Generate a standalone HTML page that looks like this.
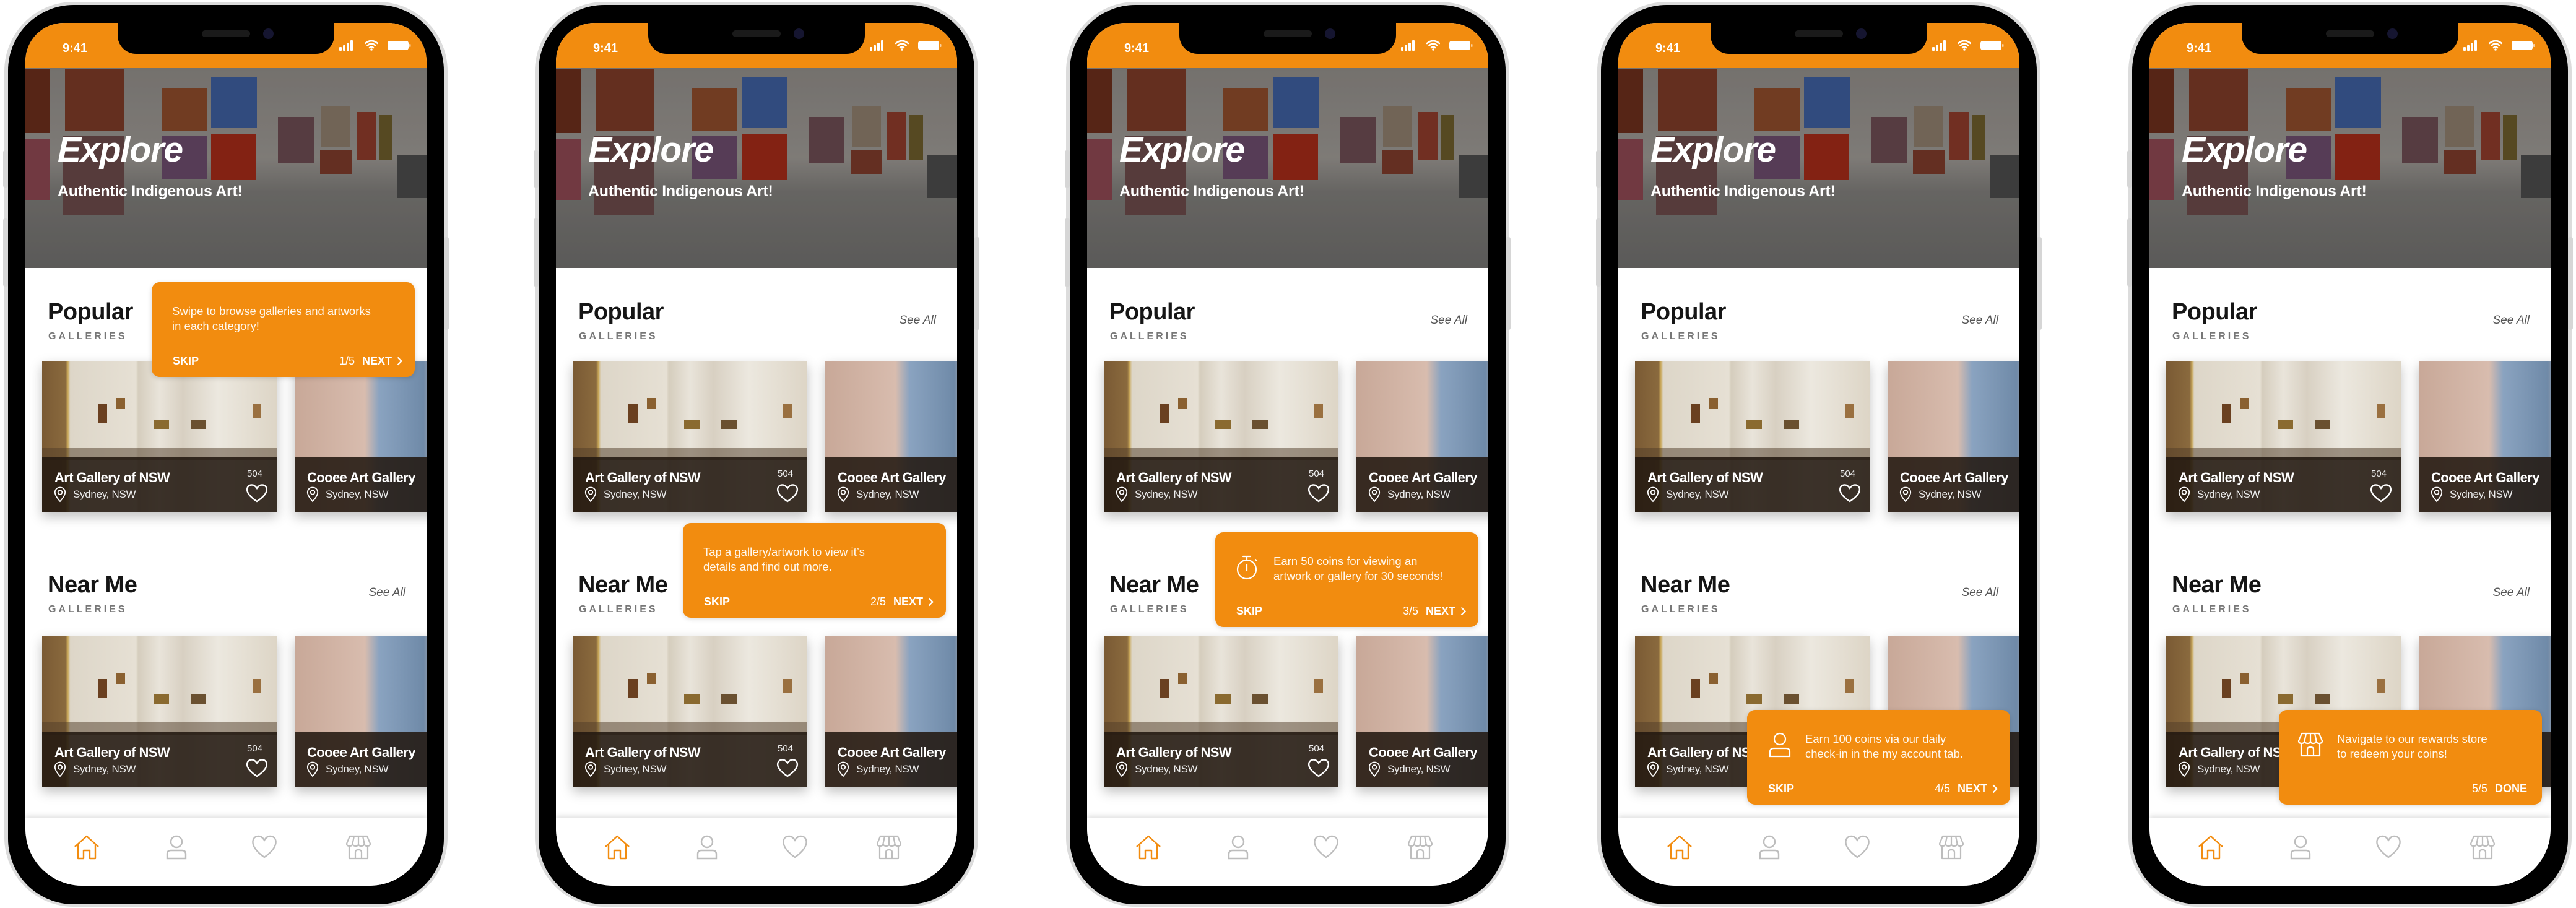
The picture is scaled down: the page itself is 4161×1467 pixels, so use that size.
<!DOCTYPE html>
<html><head><meta charset="utf-8">
<style>
*{margin:0;padding:0;box-sizing:border-box}
body{width:4161px;height:1467px;background:#fff;position:relative;overflow:hidden;font-family:"Liberation Sans",sans-serif}
.ph{position:absolute;top:3px;width:716px;height:1462px}
.rim{position:absolute;inset:0;border-radius:112px;background:#dcdcdc}
.blk{position:absolute;left:6px;top:5px;right:6px;bottom:4px;border-radius:106px;background:#000}
.btn{position:absolute;background:#d6d6d6;width:8px;border-radius:3px}
.scr{position:absolute;left:34px;top:34px;width:648px;height:1394px;background:#fff;overflow:hidden;border-radius:62px 62px 92px 92px}
.st{position:absolute;left:0;top:0;width:648px;height:73px;background:#f28c0f}
.notch{position:absolute;left:149px;top:0;width:350px;height:50px;background:#000;border-radius:0 0 30px 30px}
.spk{position:absolute;left:136px;top:12px;width:78px;height:11px;border-radius:6px;background:#1a1a1a}
.cam{position:absolute;left:235px;top:9px;width:17px;height:17px;border-radius:50%;background:#151530}
.time{position:absolute;left:60px;top:30px;color:#fff;font-size:20px;font-weight:bold}
.hero{position:absolute;left:0;top:73px;width:648px;height:323px;background:linear-gradient(180deg,#8e8a86 0%,#9a9691 45%,#7d7b78 62%,#6f6e6c 100%);overflow:hidden}
.hero i{position:absolute;display:block}
.hero .ov{inset:0;background:rgba(0,0,0,.18)}
.ex{position:absolute;left:52px;top:172px;color:#fff;font-size:57px;font-weight:bold;font-style:italic;letter-spacing:-1px}
.sub{position:absolute;left:52px;top:258px;color:#fff;font-size:25px;font-weight:bold;letter-spacing:-.3px}
.h2{position:absolute;left:36px;font-size:38px;font-weight:bold;color:#151515;letter-spacing:-.5px}
.gal{position:absolute;left:37px;font-size:16px;font-weight:bold;color:#777;letter-spacing:4px}
.see{position:absolute;right:34px;font-size:19px;font-style:italic;color:#555}
.card{position:absolute;width:379px;height:244px;box-shadow:0 8px 18px rgba(0,0,0,.25);overflow:hidden}
.c1{background:linear-gradient(90deg,#7a5a34 0,#8a6a3e 10%,#c9a85a 11%,#ddd6c8 12%,#e6e0d4 40%,#d5cdbd 41%,#e9e4da 50%,#d8d0c2 60%,#ece8df 75%,#ddd5c6 100%)}
.c2{background:linear-gradient(90deg,#c8a898 0,#d8bcae 30%,#8aa3c0 36%,#6f8aa8 55%,#d8bcae 62%,#e2844a 68%,#f0a060 78%,#d8bcae 82%,#caa898 100%)}
.card i{position:absolute;display:block}
.card .ov2{left:0;right:0;bottom:0;height:88px;background:rgba(34,24,16,.88)}
.card .floor{left:0;right:0;top:140px;height:20px;background:rgba(80,60,40,.5)}
.ct{position:absolute;left:20px;top:176px;color:#fff;font-size:22px;font-weight:bold;letter-spacing:-.6px}
.cl{position:absolute;left:50px;top:206px;color:#eee;font-size:17px;letter-spacing:-.3px}
.pin{position:absolute;left:19px;top:203px}
.cn{position:absolute;left:331px;top:174px;color:#eee;font-size:15px}
.hrt{position:absolute;left:329px;top:199px}
.tab{position:absolute;left:0;top:1285px;width:648px;height:109px;background:#fff;box-shadow:0 -4px 8px rgba(0,0,0,.12)}
.tab svg{position:absolute;top:27px}
.tip{position:absolute;width:425px;height:153px;background:#f28c0f;border-radius:13px;color:#fff;box-shadow:0 2px 8px rgba(0,0,0,.15)}
.tip .tx{position:absolute;left:33px;top:35px;font-size:18.5px;line-height:24px;color:#fff8ee;white-space:nowrap}
.tip .tx.w{left:94px}
.tip .ico{position:absolute;left:34px;top:36px}
.tip .skip{position:absolute;left:34px;top:117px;font-size:18px;font-weight:bold}
.tip .nx{position:absolute;right:20px;top:117px;font-size:18px;font-weight:bold;white-space:nowrap}
.tip .nx span{font-weight:normal;margin-right:12px}
.tip .nx svg{margin-left:8px;vertical-align:-2px}
</style></head><body>

<!-- ===== PHONE 1 ===== -->
<div class="ph" style="left:7px">
<div class="rim"></div><div class="blk"></div>
<div class="scr">
 <div class="hero"><i style="left:0;top:1px;width:40px;height:104px;background:#6a2e1c"></i><i style="left:0;top:115px;width:40px;height:98px;background:#8a4650"></i><i style="left:64px;top:1px;width:95px;height:100px;background:#7a3a26"></i><i style="left:61px;top:110px;width:98px;height:127px;background:#6a4848"></i><i style="left:220px;top:32px;width:73px;height:69px;background:#8a4a2a"></i><i style="left:300px;top:15px;width:74px;height:81px;background:#3c5c9a"></i><i style="left:220px;top:110px;width:73px;height:69px;background:#6a4a6a"></i><i style="left:300px;top:106px;width:73px;height:75px;background:#a02a18"></i><i style="left:408px;top:79px;width:58px;height:75px;background:#6a4a50"></i><i style="left:478px;top:62px;width:47px;height:65px;background:#8a7a6a"></i><i style="left:535px;top:71px;width:31px;height:78px;background:#8a3a2a"></i><i style="left:571px;top:76px;width:22px;height:73px;background:#6a5a2a"></i><i style="left:476px;top:132px;width:51px;height:39px;background:#7a3a2a"></i><i style="left:600px;top:140px;width:48px;height:70px;background:#4a4a4a"></i><i class="ov"></i></div>
 <div class="ex">Explore</div><div class="sub">Authentic Indigenous Art!</div>
 <div class="h2" style="top:446px">Popular</div><div class="gal" style="top:498px">GALLERIES</div><div class="see" style="top:470px">See All</div>
 <div class="card c1" style="left:27px;top:546px"><i style="left:120px;top:60px;width:14px;height:18px;background:#8a6030"></i><i style="left:90px;top:70px;width:15px;height:30px;background:#6a4020"></i><i style="left:180px;top:95px;width:25px;height:15px;background:#8a6a30"></i><i style="left:240px;top:95px;width:25px;height:15px;background:#6a5030"></i><i style="left:340px;top:70px;width:14px;height:22px;background:#9a7040"></i><i class="floor"></i><i class="ov2"></i><div class="ct">Art Gallery of NSW</div><svg class="pin" width="20" height="26" viewBox="0 0 20 26"><path d="M10 1.5C5.3 1.5 1.8 5 1.8 9.5 1.8 15.5 10 24 10 24s8.2-8.5 8.2-14.5C18.2 5 14.7 1.5 10 1.5z" fill="none" stroke="#fff" stroke-width="1.8"/><circle cx="10" cy="9.5" r="3.3" fill="none" stroke="#fff" stroke-width="1.8"/></svg><div class="cl">Sydney, NSW</div><div class="cn">504</div><svg class="hrt" width="36" height="30" viewBox="0 0 36 30"><path d="M18 28S3 19 2.2 10C1.6 4.5 5.5 1.5 9.8 1.5c3.8 0 6.3 2.4 8.2 5.4 1.9-3 4.4-5.4 8.2-5.4 4.3 0 8.2 3 7.6 8.5C33 19 18 28 18 28z" fill="none" stroke="#fff" stroke-width="2.4"/></svg></div>
 <div class="card c2" style="left:435px;top:546px"><i class="ov2"></i><div class="ct">Cooee Art Gallery</div><svg class="pin" width="20" height="26" viewBox="0 0 20 26"><path d="M10 1.5C5.3 1.5 1.8 5 1.8 9.5 1.8 15.5 10 24 10 24s8.2-8.5 8.2-14.5C18.2 5 14.7 1.5 10 1.5z" fill="none" stroke="#fff" stroke-width="1.8"/><circle cx="10" cy="9.5" r="3.3" fill="none" stroke="#fff" stroke-width="1.8"/></svg><div class="cl">Sydney, NSW</div></div>
 <div class="h2" style="top:887px">Near Me</div><div class="gal" style="top:939px">GALLERIES</div><div class="see" style="top:910px">See All</div>
 <div class="card c1" style="left:27px;top:990px"><i style="left:120px;top:60px;width:14px;height:18px;background:#8a6030"></i><i style="left:90px;top:70px;width:15px;height:30px;background:#6a4020"></i><i style="left:180px;top:95px;width:25px;height:15px;background:#8a6a30"></i><i style="left:240px;top:95px;width:25px;height:15px;background:#6a5030"></i><i style="left:340px;top:70px;width:14px;height:22px;background:#9a7040"></i><i class="floor"></i><i class="ov2"></i><div class="ct">Art Gallery of NSW</div><svg class="pin" width="20" height="26" viewBox="0 0 20 26"><path d="M10 1.5C5.3 1.5 1.8 5 1.8 9.5 1.8 15.5 10 24 10 24s8.2-8.5 8.2-14.5C18.2 5 14.7 1.5 10 1.5z" fill="none" stroke="#fff" stroke-width="1.8"/><circle cx="10" cy="9.5" r="3.3" fill="none" stroke="#fff" stroke-width="1.8"/></svg><div class="cl">Sydney, NSW</div><div class="cn">504</div><svg class="hrt" width="36" height="30" viewBox="0 0 36 30"><path d="M18 28S3 19 2.2 10C1.6 4.5 5.5 1.5 9.8 1.5c3.8 0 6.3 2.4 8.2 5.4 1.9-3 4.4-5.4 8.2-5.4 4.3 0 8.2 3 7.6 8.5C33 19 18 28 18 28z" fill="none" stroke="#fff" stroke-width="2.4"/></svg></div>
 <div class="card c2" style="left:435px;top:990px"><i class="ov2"></i><div class="ct">Cooee Art Gallery</div><svg class="pin" width="20" height="26" viewBox="0 0 20 26"><path d="M10 1.5C5.3 1.5 1.8 5 1.8 9.5 1.8 15.5 10 24 10 24s8.2-8.5 8.2-14.5C18.2 5 14.7 1.5 10 1.5z" fill="none" stroke="#fff" stroke-width="1.8"/><circle cx="10" cy="9.5" r="3.3" fill="none" stroke="#fff" stroke-width="1.8"/></svg><div class="cl">Sydney, NSW</div></div>
 <div class="tab"><svg style="left:78px" width="42" height="40" viewBox="0 0 42 40"><path d="M2 19 L21 2 L40 19 M7 15 V38 H16 V25 H26 V38 H35 V15" fill="none" stroke="#f28c0f" stroke-width="2.4" stroke-linejoin="round"/></svg><svg style="left:226px" width="36" height="40" viewBox="0 0 36 40"><circle cx="18" cy="11" r="9" fill="none" stroke="#bdbdbd" stroke-width="2.4"/><path d="M9 25 H27 Q33 25 33 31 V38 H3 V31 Q3 25 9 25z" fill="none" stroke="#bdbdbd" stroke-width="2.4"/></svg><svg style="left:365px" width="42" height="38" viewBox="0 0 42 38"><path d="M21 36S4 25 2.5 13C1.7 6 6 2 11.5 2c4.4 0 7.5 3 9.5 6.5C23 5 26.1 2 30.5 2 36 2 40.3 6 39.5 13 38 25 21 36 21 36z" fill="none" stroke="#bdbdbd" stroke-width="2.4"/></svg><svg style="left:517px" width="42" height="40" viewBox="0 0 42 40"><path d="M7 2 H35 L40 14 Q40 18 35 18 Q31 18 30.5 14 Q30 18 25.5 18 Q21 18 21 14 Q21 18 16.5 18 Q12 18 11.5 14 Q11 18 7 18 Q2 18 2 14z M14 2 L11.5 14 M28 2 L30.5 14 M21 2 V14 M6 18 V38 H36 V18 M16 38 V28 Q16 24 21 24 Q26 24 26 28 V38" fill="none" stroke="#bdbdbd" stroke-width="2.2" stroke-linejoin="round"/></svg></div>
 <div class="tip" style="left:204px;top:419px"><div class="tx">Swipe to browse galleries and artworks<br>in each category!</div><div class="skip">SKIP</div><div class="nx"><span>1/5</span>NEXT<svg width="9" height="15" viewBox="0 0 9 15"><path d="M1.5 1.5 L7.5 7.5 L1.5 13.5" fill="none" stroke="#fff" stroke-width="2.2"/></svg></div></div>
 <div class="st"><div class="time">9:41</div><svg style="position:absolute;left:507px;top:28px" width="22" height="17" viewBox="0 0 22 17"><rect x="0" y="11" width="4" height="6" rx="1" fill="#fff"/><rect x="6" y="8" width="4" height="9" rx="1" fill="#fff"/><rect x="12" y="4" width="4" height="13" rx="1" fill="#fff"/><rect x="18" y="0" width="4" height="17" rx="1" fill="#fff"/></svg><svg style="position:absolute;left:548px;top:27px" width="22" height="18" viewBox="0 0 22 18"><path d="M1 6 Q11 -2 21 6 M4.5 9.5 Q11 4 17.5 9.5 M8 13 Q11 10.5 14 13" fill="none" stroke="#fff" stroke-width="2.6" stroke-linecap="round"/><circle cx="11" cy="16" r="1.8" fill="#fff"/></svg><svg style="position:absolute;left:585px;top:28px" width="38" height="17" viewBox="0 0 38 17"><rect x="0" y="1" width="34" height="15" rx="4" fill="#fff"/><rect x="35" y="6" width="2.5" height="5" rx="1" fill="#fff" opacity=".6"/></svg></div>
 <div class="notch"><div class="spk"></div><div class="cam"></div></div>
</div>
<div class="btn" style="left:-2px;top:240px;height:60px"></div><div class="btn" style="left:-2px;top:350px;height:110px"></div><div class="btn" style="right:-2px;top:380px;height:150px"></div>
</div>

<!-- ===== PHONE 2 ===== -->
<div class="ph" style="left:864px">
<div class="rim"></div><div class="blk"></div>
<div class="scr">
 <div class="hero"><i style="left:0;top:1px;width:40px;height:104px;background:#6a2e1c"></i><i style="left:0;top:115px;width:40px;height:98px;background:#8a4650"></i><i style="left:64px;top:1px;width:95px;height:100px;background:#7a3a26"></i><i style="left:61px;top:110px;width:98px;height:127px;background:#6a4848"></i><i style="left:220px;top:32px;width:73px;height:69px;background:#8a4a2a"></i><i style="left:300px;top:15px;width:74px;height:81px;background:#3c5c9a"></i><i style="left:220px;top:110px;width:73px;height:69px;background:#6a4a6a"></i><i style="left:300px;top:106px;width:73px;height:75px;background:#a02a18"></i><i style="left:408px;top:79px;width:58px;height:75px;background:#6a4a50"></i><i style="left:478px;top:62px;width:47px;height:65px;background:#8a7a6a"></i><i style="left:535px;top:71px;width:31px;height:78px;background:#8a3a2a"></i><i style="left:571px;top:76px;width:22px;height:73px;background:#6a5a2a"></i><i style="left:476px;top:132px;width:51px;height:39px;background:#7a3a2a"></i><i style="left:600px;top:140px;width:48px;height:70px;background:#4a4a4a"></i><i class="ov"></i></div>
 <div class="ex">Explore</div><div class="sub">Authentic Indigenous Art!</div>
 <div class="h2" style="top:446px">Popular</div><div class="gal" style="top:498px">GALLERIES</div><div class="see" style="top:470px">See All</div>
 <div class="card c1" style="left:27px;top:546px"><i style="left:120px;top:60px;width:14px;height:18px;background:#8a6030"></i><i style="left:90px;top:70px;width:15px;height:30px;background:#6a4020"></i><i style="left:180px;top:95px;width:25px;height:15px;background:#8a6a30"></i><i style="left:240px;top:95px;width:25px;height:15px;background:#6a5030"></i><i style="left:340px;top:70px;width:14px;height:22px;background:#9a7040"></i><i class="floor"></i><i class="ov2"></i><div class="ct">Art Gallery of NSW</div><svg class="pin" width="20" height="26" viewBox="0 0 20 26"><path d="M10 1.5C5.3 1.5 1.8 5 1.8 9.5 1.8 15.5 10 24 10 24s8.2-8.5 8.2-14.5C18.2 5 14.7 1.5 10 1.5z" fill="none" stroke="#fff" stroke-width="1.8"/><circle cx="10" cy="9.5" r="3.3" fill="none" stroke="#fff" stroke-width="1.8"/></svg><div class="cl">Sydney, NSW</div><div class="cn">504</div><svg class="hrt" width="36" height="30" viewBox="0 0 36 30"><path d="M18 28S3 19 2.2 10C1.6 4.5 5.5 1.5 9.8 1.5c3.8 0 6.3 2.4 8.2 5.4 1.9-3 4.4-5.4 8.2-5.4 4.3 0 8.2 3 7.6 8.5C33 19 18 28 18 28z" fill="none" stroke="#fff" stroke-width="2.4"/></svg></div>
 <div class="card c2" style="left:435px;top:546px"><i class="ov2"></i><div class="ct">Cooee Art Gallery</div><svg class="pin" width="20" height="26" viewBox="0 0 20 26"><path d="M10 1.5C5.3 1.5 1.8 5 1.8 9.5 1.8 15.5 10 24 10 24s8.2-8.5 8.2-14.5C18.2 5 14.7 1.5 10 1.5z" fill="none" stroke="#fff" stroke-width="1.8"/><circle cx="10" cy="9.5" r="3.3" fill="none" stroke="#fff" stroke-width="1.8"/></svg><div class="cl">Sydney, NSW</div></div>
 <div class="h2" style="top:887px">Near Me</div><div class="gal" style="top:939px">GALLERIES</div><div class="see" style="top:910px">See All</div>
 <div class="card c1" style="left:27px;top:990px"><i style="left:120px;top:60px;width:14px;height:18px;background:#8a6030"></i><i style="left:90px;top:70px;width:15px;height:30px;background:#6a4020"></i><i style="left:180px;top:95px;width:25px;height:15px;background:#8a6a30"></i><i style="left:240px;top:95px;width:25px;height:15px;background:#6a5030"></i><i style="left:340px;top:70px;width:14px;height:22px;background:#9a7040"></i><i class="floor"></i><i class="ov2"></i><div class="ct">Art Gallery of NSW</div><svg class="pin" width="20" height="26" viewBox="0 0 20 26"><path d="M10 1.5C5.3 1.5 1.8 5 1.8 9.5 1.8 15.5 10 24 10 24s8.2-8.5 8.2-14.5C18.2 5 14.7 1.5 10 1.5z" fill="none" stroke="#fff" stroke-width="1.8"/><circle cx="10" cy="9.5" r="3.3" fill="none" stroke="#fff" stroke-width="1.8"/></svg><div class="cl">Sydney, NSW</div><div class="cn">504</div><svg class="hrt" width="36" height="30" viewBox="0 0 36 30"><path d="M18 28S3 19 2.2 10C1.6 4.5 5.5 1.5 9.8 1.5c3.8 0 6.3 2.4 8.2 5.4 1.9-3 4.4-5.4 8.2-5.4 4.3 0 8.2 3 7.6 8.5C33 19 18 28 18 28z" fill="none" stroke="#fff" stroke-width="2.4"/></svg></div>
 <div class="card c2" style="left:435px;top:990px"><i class="ov2"></i><div class="ct">Cooee Art Gallery</div><svg class="pin" width="20" height="26" viewBox="0 0 20 26"><path d="M10 1.5C5.3 1.5 1.8 5 1.8 9.5 1.8 15.5 10 24 10 24s8.2-8.5 8.2-14.5C18.2 5 14.7 1.5 10 1.5z" fill="none" stroke="#fff" stroke-width="1.8"/><circle cx="10" cy="9.5" r="3.3" fill="none" stroke="#fff" stroke-width="1.8"/></svg><div class="cl">Sydney, NSW</div></div>
 <div class="tab"><svg style="left:78px" width="42" height="40" viewBox="0 0 42 40"><path d="M2 19 L21 2 L40 19 M7 15 V38 H16 V25 H26 V38 H35 V15" fill="none" stroke="#f28c0f" stroke-width="2.4" stroke-linejoin="round"/></svg><svg style="left:226px" width="36" height="40" viewBox="0 0 36 40"><circle cx="18" cy="11" r="9" fill="none" stroke="#bdbdbd" stroke-width="2.4"/><path d="M9 25 H27 Q33 25 33 31 V38 H3 V31 Q3 25 9 25z" fill="none" stroke="#bdbdbd" stroke-width="2.4"/></svg><svg style="left:365px" width="42" height="38" viewBox="0 0 42 38"><path d="M21 36S4 25 2.5 13C1.7 6 6 2 11.5 2c4.4 0 7.5 3 9.5 6.5C23 5 26.1 2 30.5 2 36 2 40.3 6 39.5 13 38 25 21 36 21 36z" fill="none" stroke="#bdbdbd" stroke-width="2.4"/></svg><svg style="left:517px" width="42" height="40" viewBox="0 0 42 40"><path d="M7 2 H35 L40 14 Q40 18 35 18 Q31 18 30.5 14 Q30 18 25.5 18 Q21 18 21 14 Q21 18 16.5 18 Q12 18 11.5 14 Q11 18 7 18 Q2 18 2 14z M14 2 L11.5 14 M28 2 L30.5 14 M21 2 V14 M6 18 V38 H36 V18 M16 38 V28 Q16 24 21 24 Q26 24 26 28 V38" fill="none" stroke="#bdbdbd" stroke-width="2.2" stroke-linejoin="round"/></svg></div>
 <div class="tip" style="left:205px;top:808px"><div class="tx">Tap a gallery/artwork to view it’s<br>details and find out more.</div><div class="skip">SKIP</div><div class="nx"><span>2/5</span>NEXT<svg width="9" height="15" viewBox="0 0 9 15"><path d="M1.5 1.5 L7.5 7.5 L1.5 13.5" fill="none" stroke="#fff" stroke-width="2.2"/></svg></div></div>
 <div class="st"><div class="time">9:41</div><svg style="position:absolute;left:507px;top:28px" width="22" height="17" viewBox="0 0 22 17"><rect x="0" y="11" width="4" height="6" rx="1" fill="#fff"/><rect x="6" y="8" width="4" height="9" rx="1" fill="#fff"/><rect x="12" y="4" width="4" height="13" rx="1" fill="#fff"/><rect x="18" y="0" width="4" height="17" rx="1" fill="#fff"/></svg><svg style="position:absolute;left:548px;top:27px" width="22" height="18" viewBox="0 0 22 18"><path d="M1 6 Q11 -2 21 6 M4.5 9.5 Q11 4 17.5 9.5 M8 13 Q11 10.5 14 13" fill="none" stroke="#fff" stroke-width="2.6" stroke-linecap="round"/><circle cx="11" cy="16" r="1.8" fill="#fff"/></svg><svg style="position:absolute;left:585px;top:28px" width="38" height="17" viewBox="0 0 38 17"><rect x="0" y="1" width="34" height="15" rx="4" fill="#fff"/><rect x="35" y="6" width="2.5" height="5" rx="1" fill="#fff" opacity=".6"/></svg></div>
 <div class="notch"><div class="spk"></div><div class="cam"></div></div>
</div>
<div class="btn" style="left:-2px;top:240px;height:60px"></div><div class="btn" style="left:-2px;top:350px;height:110px"></div><div class="btn" style="right:-2px;top:380px;height:150px"></div>
</div>

<!-- ===== PHONE 3 ===== -->
<div class="ph" style="left:1722px">
<div class="rim"></div><div class="blk"></div>
<div class="scr">
 <div class="hero"><i style="left:0;top:1px;width:40px;height:104px;background:#6a2e1c"></i><i style="left:0;top:115px;width:40px;height:98px;background:#8a4650"></i><i style="left:64px;top:1px;width:95px;height:100px;background:#7a3a26"></i><i style="left:61px;top:110px;width:98px;height:127px;background:#6a4848"></i><i style="left:220px;top:32px;width:73px;height:69px;background:#8a4a2a"></i><i style="left:300px;top:15px;width:74px;height:81px;background:#3c5c9a"></i><i style="left:220px;top:110px;width:73px;height:69px;background:#6a4a6a"></i><i style="left:300px;top:106px;width:73px;height:75px;background:#a02a18"></i><i style="left:408px;top:79px;width:58px;height:75px;background:#6a4a50"></i><i style="left:478px;top:62px;width:47px;height:65px;background:#8a7a6a"></i><i style="left:535px;top:71px;width:31px;height:78px;background:#8a3a2a"></i><i style="left:571px;top:76px;width:22px;height:73px;background:#6a5a2a"></i><i style="left:476px;top:132px;width:51px;height:39px;background:#7a3a2a"></i><i style="left:600px;top:140px;width:48px;height:70px;background:#4a4a4a"></i><i class="ov"></i></div>
 <div class="ex">Explore</div><div class="sub">Authentic Indigenous Art!</div>
 <div class="h2" style="top:446px">Popular</div><div class="gal" style="top:498px">GALLERIES</div><div class="see" style="top:470px">See All</div>
 <div class="card c1" style="left:27px;top:546px"><i style="left:120px;top:60px;width:14px;height:18px;background:#8a6030"></i><i style="left:90px;top:70px;width:15px;height:30px;background:#6a4020"></i><i style="left:180px;top:95px;width:25px;height:15px;background:#8a6a30"></i><i style="left:240px;top:95px;width:25px;height:15px;background:#6a5030"></i><i style="left:340px;top:70px;width:14px;height:22px;background:#9a7040"></i><i class="floor"></i><i class="ov2"></i><div class="ct">Art Gallery of NSW</div><svg class="pin" width="20" height="26" viewBox="0 0 20 26"><path d="M10 1.5C5.3 1.5 1.8 5 1.8 9.5 1.8 15.5 10 24 10 24s8.2-8.5 8.2-14.5C18.2 5 14.7 1.5 10 1.5z" fill="none" stroke="#fff" stroke-width="1.8"/><circle cx="10" cy="9.5" r="3.3" fill="none" stroke="#fff" stroke-width="1.8"/></svg><div class="cl">Sydney, NSW</div><div class="cn">504</div><svg class="hrt" width="36" height="30" viewBox="0 0 36 30"><path d="M18 28S3 19 2.2 10C1.6 4.5 5.5 1.5 9.8 1.5c3.8 0 6.3 2.4 8.2 5.4 1.9-3 4.4-5.4 8.2-5.4 4.3 0 8.2 3 7.6 8.5C33 19 18 28 18 28z" fill="none" stroke="#fff" stroke-width="2.4"/></svg></div>
 <div class="card c2" style="left:435px;top:546px"><i class="ov2"></i><div class="ct">Cooee Art Gallery</div><svg class="pin" width="20" height="26" viewBox="0 0 20 26"><path d="M10 1.5C5.3 1.5 1.8 5 1.8 9.5 1.8 15.5 10 24 10 24s8.2-8.5 8.2-14.5C18.2 5 14.7 1.5 10 1.5z" fill="none" stroke="#fff" stroke-width="1.8"/><circle cx="10" cy="9.5" r="3.3" fill="none" stroke="#fff" stroke-width="1.8"/></svg><div class="cl">Sydney, NSW</div></div>
 <div class="h2" style="top:887px">Near Me</div><div class="gal" style="top:939px">GALLERIES</div><div class="see" style="top:910px">See All</div>
 <div class="card c1" style="left:27px;top:990px"><i style="left:120px;top:60px;width:14px;height:18px;background:#8a6030"></i><i style="left:90px;top:70px;width:15px;height:30px;background:#6a4020"></i><i style="left:180px;top:95px;width:25px;height:15px;background:#8a6a30"></i><i style="left:240px;top:95px;width:25px;height:15px;background:#6a5030"></i><i style="left:340px;top:70px;width:14px;height:22px;background:#9a7040"></i><i class="floor"></i><i class="ov2"></i><div class="ct">Art Gallery of NSW</div><svg class="pin" width="20" height="26" viewBox="0 0 20 26"><path d="M10 1.5C5.3 1.5 1.8 5 1.8 9.5 1.8 15.5 10 24 10 24s8.2-8.5 8.2-14.5C18.2 5 14.7 1.5 10 1.5z" fill="none" stroke="#fff" stroke-width="1.8"/><circle cx="10" cy="9.5" r="3.3" fill="none" stroke="#fff" stroke-width="1.8"/></svg><div class="cl">Sydney, NSW</div><div class="cn">504</div><svg class="hrt" width="36" height="30" viewBox="0 0 36 30"><path d="M18 28S3 19 2.2 10C1.6 4.5 5.5 1.5 9.8 1.5c3.8 0 6.3 2.4 8.2 5.4 1.9-3 4.4-5.4 8.2-5.4 4.3 0 8.2 3 7.6 8.5C33 19 18 28 18 28z" fill="none" stroke="#fff" stroke-width="2.4"/></svg></div>
 <div class="card c2" style="left:435px;top:990px"><i class="ov2"></i><div class="ct">Cooee Art Gallery</div><svg class="pin" width="20" height="26" viewBox="0 0 20 26"><path d="M10 1.5C5.3 1.5 1.8 5 1.8 9.5 1.8 15.5 10 24 10 24s8.2-8.5 8.2-14.5C18.2 5 14.7 1.5 10 1.5z" fill="none" stroke="#fff" stroke-width="1.8"/><circle cx="10" cy="9.5" r="3.3" fill="none" stroke="#fff" stroke-width="1.8"/></svg><div class="cl">Sydney, NSW</div></div>
 <div class="tab"><svg style="left:78px" width="42" height="40" viewBox="0 0 42 40"><path d="M2 19 L21 2 L40 19 M7 15 V38 H16 V25 H26 V38 H35 V15" fill="none" stroke="#f28c0f" stroke-width="2.4" stroke-linejoin="round"/></svg><svg style="left:226px" width="36" height="40" viewBox="0 0 36 40"><circle cx="18" cy="11" r="9" fill="none" stroke="#bdbdbd" stroke-width="2.4"/><path d="M9 25 H27 Q33 25 33 31 V38 H3 V31 Q3 25 9 25z" fill="none" stroke="#bdbdbd" stroke-width="2.4"/></svg><svg style="left:365px" width="42" height="38" viewBox="0 0 42 38"><path d="M21 36S4 25 2.5 13C1.7 6 6 2 11.5 2c4.4 0 7.5 3 9.5 6.5C23 5 26.1 2 30.5 2 36 2 40.3 6 39.5 13 38 25 21 36 21 36z" fill="none" stroke="#bdbdbd" stroke-width="2.4"/></svg><svg style="left:517px" width="42" height="40" viewBox="0 0 42 40"><path d="M7 2 H35 L40 14 Q40 18 35 18 Q31 18 30.5 14 Q30 18 25.5 18 Q21 18 21 14 Q21 18 16.5 18 Q12 18 11.5 14 Q11 18 7 18 Q2 18 2 14z M14 2 L11.5 14 M28 2 L30.5 14 M21 2 V14 M6 18 V38 H36 V18 M16 38 V28 Q16 24 21 24 Q26 24 26 28 V38" fill="none" stroke="#bdbdbd" stroke-width="2.2" stroke-linejoin="round"/></svg></div>
 <div class="tip" style="left:207px;top:823px"><svg class="ico" width="36" height="42" viewBox="0 0 36 42"><circle cx="17" cy="24" r="15" fill="none" stroke="#fff" stroke-width="2.2"/><path d="M11 3 H23 M17 3 V9 M17 16 V26 M31 8 L33 10" fill="none" stroke="#fff" stroke-width="2.2" stroke-linecap="round"/></svg><div class="tx w">Earn 50 coins for viewing an<br>artwork or gallery for 30 seconds!</div><div class="skip">SKIP</div><div class="nx"><span>3/5</span>NEXT<svg width="9" height="15" viewBox="0 0 9 15"><path d="M1.5 1.5 L7.5 7.5 L1.5 13.5" fill="none" stroke="#fff" stroke-width="2.2"/></svg></div></div>
 <div class="st"><div class="time">9:41</div><svg style="position:absolute;left:507px;top:28px" width="22" height="17" viewBox="0 0 22 17"><rect x="0" y="11" width="4" height="6" rx="1" fill="#fff"/><rect x="6" y="8" width="4" height="9" rx="1" fill="#fff"/><rect x="12" y="4" width="4" height="13" rx="1" fill="#fff"/><rect x="18" y="0" width="4" height="17" rx="1" fill="#fff"/></svg><svg style="position:absolute;left:548px;top:27px" width="22" height="18" viewBox="0 0 22 18"><path d="M1 6 Q11 -2 21 6 M4.5 9.5 Q11 4 17.5 9.5 M8 13 Q11 10.5 14 13" fill="none" stroke="#fff" stroke-width="2.6" stroke-linecap="round"/><circle cx="11" cy="16" r="1.8" fill="#fff"/></svg><svg style="position:absolute;left:585px;top:28px" width="38" height="17" viewBox="0 0 38 17"><rect x="0" y="1" width="34" height="15" rx="4" fill="#fff"/><rect x="35" y="6" width="2.5" height="5" rx="1" fill="#fff" opacity=".6"/></svg></div>
 <div class="notch"><div class="spk"></div><div class="cam"></div></div>
</div>
<div class="btn" style="left:-2px;top:240px;height:60px"></div><div class="btn" style="left:-2px;top:350px;height:110px"></div><div class="btn" style="right:-2px;top:380px;height:150px"></div>
</div>

<!-- ===== PHONE 4 ===== -->
<div class="ph" style="left:2580px">
<div class="rim"></div><div class="blk"></div>
<div class="scr">
 <div class="hero"><i style="left:0;top:1px;width:40px;height:104px;background:#6a2e1c"></i><i style="left:0;top:115px;width:40px;height:98px;background:#8a4650"></i><i style="left:64px;top:1px;width:95px;height:100px;background:#7a3a26"></i><i style="left:61px;top:110px;width:98px;height:127px;background:#6a4848"></i><i style="left:220px;top:32px;width:73px;height:69px;background:#8a4a2a"></i><i style="left:300px;top:15px;width:74px;height:81px;background:#3c5c9a"></i><i style="left:220px;top:110px;width:73px;height:69px;background:#6a4a6a"></i><i style="left:300px;top:106px;width:73px;height:75px;background:#a02a18"></i><i style="left:408px;top:79px;width:58px;height:75px;background:#6a4a50"></i><i style="left:478px;top:62px;width:47px;height:65px;background:#8a7a6a"></i><i style="left:535px;top:71px;width:31px;height:78px;background:#8a3a2a"></i><i style="left:571px;top:76px;width:22px;height:73px;background:#6a5a2a"></i><i style="left:476px;top:132px;width:51px;height:39px;background:#7a3a2a"></i><i style="left:600px;top:140px;width:48px;height:70px;background:#4a4a4a"></i><i class="ov"></i></div>
 <div class="ex">Explore</div><div class="sub">Authentic Indigenous Art!</div>
 <div class="h2" style="top:446px">Popular</div><div class="gal" style="top:498px">GALLERIES</div><div class="see" style="top:470px">See All</div>
 <div class="card c1" style="left:27px;top:546px"><i style="left:120px;top:60px;width:14px;height:18px;background:#8a6030"></i><i style="left:90px;top:70px;width:15px;height:30px;background:#6a4020"></i><i style="left:180px;top:95px;width:25px;height:15px;background:#8a6a30"></i><i style="left:240px;top:95px;width:25px;height:15px;background:#6a5030"></i><i style="left:340px;top:70px;width:14px;height:22px;background:#9a7040"></i><i class="floor"></i><i class="ov2"></i><div class="ct">Art Gallery of NSW</div><svg class="pin" width="20" height="26" viewBox="0 0 20 26"><path d="M10 1.5C5.3 1.5 1.8 5 1.8 9.5 1.8 15.5 10 24 10 24s8.2-8.5 8.2-14.5C18.2 5 14.7 1.5 10 1.5z" fill="none" stroke="#fff" stroke-width="1.8"/><circle cx="10" cy="9.5" r="3.3" fill="none" stroke="#fff" stroke-width="1.8"/></svg><div class="cl">Sydney, NSW</div><div class="cn">504</div><svg class="hrt" width="36" height="30" viewBox="0 0 36 30"><path d="M18 28S3 19 2.2 10C1.6 4.5 5.5 1.5 9.8 1.5c3.8 0 6.3 2.4 8.2 5.4 1.9-3 4.4-5.4 8.2-5.4 4.3 0 8.2 3 7.6 8.5C33 19 18 28 18 28z" fill="none" stroke="#fff" stroke-width="2.4"/></svg></div>
 <div class="card c2" style="left:435px;top:546px"><i class="ov2"></i><div class="ct">Cooee Art Gallery</div><svg class="pin" width="20" height="26" viewBox="0 0 20 26"><path d="M10 1.5C5.3 1.5 1.8 5 1.8 9.5 1.8 15.5 10 24 10 24s8.2-8.5 8.2-14.5C18.2 5 14.7 1.5 10 1.5z" fill="none" stroke="#fff" stroke-width="1.8"/><circle cx="10" cy="9.5" r="3.3" fill="none" stroke="#fff" stroke-width="1.8"/></svg><div class="cl">Sydney, NSW</div></div>
 <div class="h2" style="top:887px">Near Me</div><div class="gal" style="top:939px">GALLERIES</div><div class="see" style="top:910px">See All</div>
 <div class="card c1" style="left:27px;top:990px"><i style="left:120px;top:60px;width:14px;height:18px;background:#8a6030"></i><i style="left:90px;top:70px;width:15px;height:30px;background:#6a4020"></i><i style="left:180px;top:95px;width:25px;height:15px;background:#8a6a30"></i><i style="left:240px;top:95px;width:25px;height:15px;background:#6a5030"></i><i style="left:340px;top:70px;width:14px;height:22px;background:#9a7040"></i><i class="floor"></i><i class="ov2"></i><div class="ct">Art Gallery of NSW</div><svg class="pin" width="20" height="26" viewBox="0 0 20 26"><path d="M10 1.5C5.3 1.5 1.8 5 1.8 9.5 1.8 15.5 10 24 10 24s8.2-8.5 8.2-14.5C18.2 5 14.7 1.5 10 1.5z" fill="none" stroke="#fff" stroke-width="1.8"/><circle cx="10" cy="9.5" r="3.3" fill="none" stroke="#fff" stroke-width="1.8"/></svg><div class="cl">Sydney, NSW</div><div class="cn">504</div><svg class="hrt" width="36" height="30" viewBox="0 0 36 30"><path d="M18 28S3 19 2.2 10C1.6 4.5 5.5 1.5 9.8 1.5c3.8 0 6.3 2.4 8.2 5.4 1.9-3 4.4-5.4 8.2-5.4 4.3 0 8.2 3 7.6 8.5C33 19 18 28 18 28z" fill="none" stroke="#fff" stroke-width="2.4"/></svg></div>
 <div class="card c2" style="left:435px;top:990px"><i class="ov2"></i><div class="ct">Cooee Art Gallery</div><svg class="pin" width="20" height="26" viewBox="0 0 20 26"><path d="M10 1.5C5.3 1.5 1.8 5 1.8 9.5 1.8 15.5 10 24 10 24s8.2-8.5 8.2-14.5C18.2 5 14.7 1.5 10 1.5z" fill="none" stroke="#fff" stroke-width="1.8"/><circle cx="10" cy="9.5" r="3.3" fill="none" stroke="#fff" stroke-width="1.8"/></svg><div class="cl">Sydney, NSW</div></div>
 <div class="tab"><svg style="left:78px" width="42" height="40" viewBox="0 0 42 40"><path d="M2 19 L21 2 L40 19 M7 15 V38 H16 V25 H26 V38 H35 V15" fill="none" stroke="#f28c0f" stroke-width="2.4" stroke-linejoin="round"/></svg><svg style="left:226px" width="36" height="40" viewBox="0 0 36 40"><circle cx="18" cy="11" r="9" fill="none" stroke="#bdbdbd" stroke-width="2.4"/><path d="M9 25 H27 Q33 25 33 31 V38 H3 V31 Q3 25 9 25z" fill="none" stroke="#bdbdbd" stroke-width="2.4"/></svg><svg style="left:365px" width="42" height="38" viewBox="0 0 42 38"><path d="M21 36S4 25 2.5 13C1.7 6 6 2 11.5 2c4.4 0 7.5 3 9.5 6.5C23 5 26.1 2 30.5 2 36 2 40.3 6 39.5 13 38 25 21 36 21 36z" fill="none" stroke="#bdbdbd" stroke-width="2.4"/></svg><svg style="left:517px" width="42" height="40" viewBox="0 0 42 40"><path d="M7 2 H35 L40 14 Q40 18 35 18 Q31 18 30.5 14 Q30 18 25.5 18 Q21 18 21 14 Q21 18 16.5 18 Q12 18 11.5 14 Q11 18 7 18 Q2 18 2 14z M14 2 L11.5 14 M28 2 L30.5 14 M21 2 V14 M6 18 V38 H36 V18 M16 38 V28 Q16 24 21 24 Q26 24 26 28 V38" fill="none" stroke="#bdbdbd" stroke-width="2.2" stroke-linejoin="round"/></svg></div>
 <div class="tip" style="left:208px;top:1110px"><svg class="ico" width="38" height="42" viewBox="0 0 38 42"><circle cx="19" cy="11" r="9" fill="none" stroke="#fff" stroke-width="2.2"/><path d="M9 26 H29 Q35 26 35 32 V39 H3 V32 Q3 26 9 26z" fill="none" stroke="#fff" stroke-width="2.2"/></svg><div class="tx w">Earn 100 coins via our daily<br>check-in in the my account tab.</div><div class="skip">SKIP</div><div class="nx"><span>4/5</span>NEXT<svg width="9" height="15" viewBox="0 0 9 15"><path d="M1.5 1.5 L7.5 7.5 L1.5 13.5" fill="none" stroke="#fff" stroke-width="2.2"/></svg></div></div>
 <div class="st"><div class="time">9:41</div><svg style="position:absolute;left:507px;top:28px" width="22" height="17" viewBox="0 0 22 17"><rect x="0" y="11" width="4" height="6" rx="1" fill="#fff"/><rect x="6" y="8" width="4" height="9" rx="1" fill="#fff"/><rect x="12" y="4" width="4" height="13" rx="1" fill="#fff"/><rect x="18" y="0" width="4" height="17" rx="1" fill="#fff"/></svg><svg style="position:absolute;left:548px;top:27px" width="22" height="18" viewBox="0 0 22 18"><path d="M1 6 Q11 -2 21 6 M4.5 9.5 Q11 4 17.5 9.5 M8 13 Q11 10.5 14 13" fill="none" stroke="#fff" stroke-width="2.6" stroke-linecap="round"/><circle cx="11" cy="16" r="1.8" fill="#fff"/></svg><svg style="position:absolute;left:585px;top:28px" width="38" height="17" viewBox="0 0 38 17"><rect x="0" y="1" width="34" height="15" rx="4" fill="#fff"/><rect x="35" y="6" width="2.5" height="5" rx="1" fill="#fff" opacity=".6"/></svg></div>
 <div class="notch"><div class="spk"></div><div class="cam"></div></div>
</div>
<div class="btn" style="left:-2px;top:240px;height:60px"></div><div class="btn" style="left:-2px;top:350px;height:110px"></div><div class="btn" style="right:-2px;top:380px;height:150px"></div>
</div>

<!-- ===== PHONE 5 ===== -->
<div class="ph" style="left:3438px">
<div class="rim"></div><div class="blk"></div>
<div class="scr">
 <div class="hero"><i style="left:0;top:1px;width:40px;height:104px;background:#6a2e1c"></i><i style="left:0;top:115px;width:40px;height:98px;background:#8a4650"></i><i style="left:64px;top:1px;width:95px;height:100px;background:#7a3a26"></i><i style="left:61px;top:110px;width:98px;height:127px;background:#6a4848"></i><i style="left:220px;top:32px;width:73px;height:69px;background:#8a4a2a"></i><i style="left:300px;top:15px;width:74px;height:81px;background:#3c5c9a"></i><i style="left:220px;top:110px;width:73px;height:69px;background:#6a4a6a"></i><i style="left:300px;top:106px;width:73px;height:75px;background:#a02a18"></i><i style="left:408px;top:79px;width:58px;height:75px;background:#6a4a50"></i><i style="left:478px;top:62px;width:47px;height:65px;background:#8a7a6a"></i><i style="left:535px;top:71px;width:31px;height:78px;background:#8a3a2a"></i><i style="left:571px;top:76px;width:22px;height:73px;background:#6a5a2a"></i><i style="left:476px;top:132px;width:51px;height:39px;background:#7a3a2a"></i><i style="left:600px;top:140px;width:48px;height:70px;background:#4a4a4a"></i><i class="ov"></i></div>
 <div class="ex">Explore</div><div class="sub">Authentic Indigenous Art!</div>
 <div class="h2" style="top:446px">Popular</div><div class="gal" style="top:498px">GALLERIES</div><div class="see" style="top:470px">See All</div>
 <div class="card c1" style="left:27px;top:546px"><i style="left:120px;top:60px;width:14px;height:18px;background:#8a6030"></i><i style="left:90px;top:70px;width:15px;height:30px;background:#6a4020"></i><i style="left:180px;top:95px;width:25px;height:15px;background:#8a6a30"></i><i style="left:240px;top:95px;width:25px;height:15px;background:#6a5030"></i><i style="left:340px;top:70px;width:14px;height:22px;background:#9a7040"></i><i class="floor"></i><i class="ov2"></i><div class="ct">Art Gallery of NSW</div><svg class="pin" width="20" height="26" viewBox="0 0 20 26"><path d="M10 1.5C5.3 1.5 1.8 5 1.8 9.5 1.8 15.5 10 24 10 24s8.2-8.5 8.2-14.5C18.2 5 14.7 1.5 10 1.5z" fill="none" stroke="#fff" stroke-width="1.8"/><circle cx="10" cy="9.5" r="3.3" fill="none" stroke="#fff" stroke-width="1.8"/></svg><div class="cl">Sydney, NSW</div><div class="cn">504</div><svg class="hrt" width="36" height="30" viewBox="0 0 36 30"><path d="M18 28S3 19 2.2 10C1.6 4.5 5.5 1.5 9.8 1.5c3.8 0 6.3 2.4 8.2 5.4 1.9-3 4.4-5.4 8.2-5.4 4.3 0 8.2 3 7.6 8.5C33 19 18 28 18 28z" fill="none" stroke="#fff" stroke-width="2.4"/></svg></div>
 <div class="card c2" style="left:435px;top:546px"><i class="ov2"></i><div class="ct">Cooee Art Gallery</div><svg class="pin" width="20" height="26" viewBox="0 0 20 26"><path d="M10 1.5C5.3 1.5 1.8 5 1.8 9.5 1.8 15.5 10 24 10 24s8.2-8.5 8.2-14.5C18.2 5 14.7 1.5 10 1.5z" fill="none" stroke="#fff" stroke-width="1.8"/><circle cx="10" cy="9.5" r="3.3" fill="none" stroke="#fff" stroke-width="1.8"/></svg><div class="cl">Sydney, NSW</div></div>
 <div class="h2" style="top:887px">Near Me</div><div class="gal" style="top:939px">GALLERIES</div><div class="see" style="top:910px">See All</div>
 <div class="card c1" style="left:27px;top:990px"><i style="left:120px;top:60px;width:14px;height:18px;background:#8a6030"></i><i style="left:90px;top:70px;width:15px;height:30px;background:#6a4020"></i><i style="left:180px;top:95px;width:25px;height:15px;background:#8a6a30"></i><i style="left:240px;top:95px;width:25px;height:15px;background:#6a5030"></i><i style="left:340px;top:70px;width:14px;height:22px;background:#9a7040"></i><i class="floor"></i><i class="ov2"></i><div class="ct">Art Gallery of NSW</div><svg class="pin" width="20" height="26" viewBox="0 0 20 26"><path d="M10 1.5C5.3 1.5 1.8 5 1.8 9.5 1.8 15.5 10 24 10 24s8.2-8.5 8.2-14.5C18.2 5 14.7 1.5 10 1.5z" fill="none" stroke="#fff" stroke-width="1.8"/><circle cx="10" cy="9.5" r="3.3" fill="none" stroke="#fff" stroke-width="1.8"/></svg><div class="cl">Sydney, NSW</div><div class="cn">504</div><svg class="hrt" width="36" height="30" viewBox="0 0 36 30"><path d="M18 28S3 19 2.2 10C1.6 4.5 5.5 1.5 9.8 1.5c3.8 0 6.3 2.4 8.2 5.4 1.9-3 4.4-5.4 8.2-5.4 4.3 0 8.2 3 7.6 8.5C33 19 18 28 18 28z" fill="none" stroke="#fff" stroke-width="2.4"/></svg></div>
 <div class="card c2" style="left:435px;top:990px"><i class="ov2"></i><div class="ct">Cooee Art Gallery</div><svg class="pin" width="20" height="26" viewBox="0 0 20 26"><path d="M10 1.5C5.3 1.5 1.8 5 1.8 9.5 1.8 15.5 10 24 10 24s8.2-8.5 8.2-14.5C18.2 5 14.7 1.5 10 1.5z" fill="none" stroke="#fff" stroke-width="1.8"/><circle cx="10" cy="9.5" r="3.3" fill="none" stroke="#fff" stroke-width="1.8"/></svg><div class="cl">Sydney, NSW</div></div>
 <div class="tab"><svg style="left:78px" width="42" height="40" viewBox="0 0 42 40"><path d="M2 19 L21 2 L40 19 M7 15 V38 H16 V25 H26 V38 H35 V15" fill="none" stroke="#f28c0f" stroke-width="2.4" stroke-linejoin="round"/></svg><svg style="left:226px" width="36" height="40" viewBox="0 0 36 40"><circle cx="18" cy="11" r="9" fill="none" stroke="#bdbdbd" stroke-width="2.4"/><path d="M9 25 H27 Q33 25 33 31 V38 H3 V31 Q3 25 9 25z" fill="none" stroke="#bdbdbd" stroke-width="2.4"/></svg><svg style="left:365px" width="42" height="38" viewBox="0 0 42 38"><path d="M21 36S4 25 2.5 13C1.7 6 6 2 11.5 2c4.4 0 7.5 3 9.5 6.5C23 5 26.1 2 30.5 2 36 2 40.3 6 39.5 13 38 25 21 36 21 36z" fill="none" stroke="#bdbdbd" stroke-width="2.4"/></svg><svg style="left:517px" width="42" height="40" viewBox="0 0 42 40"><path d="M7 2 H35 L40 14 Q40 18 35 18 Q31 18 30.5 14 Q30 18 25.5 18 Q21 18 21 14 Q21 18 16.5 18 Q12 18 11.5 14 Q11 18 7 18 Q2 18 2 14z M14 2 L11.5 14 M28 2 L30.5 14 M21 2 V14 M6 18 V38 H36 V18 M16 38 V28 Q16 24 21 24 Q26 24 26 28 V38" fill="none" stroke="#bdbdbd" stroke-width="2.2" stroke-linejoin="round"/></svg></div>
 <div class="tip" style="left:209px;top:1110px"><svg class="ico" width="42" height="40" viewBox="0 0 42 40" style="left:30px"><path d="M7 2 H35 L40 14 Q40 18 35 18 Q31 18 30.5 14 Q30 18 25.5 18 Q21 18 21 14 Q21 18 16.5 18 Q12 18 11.5 14 Q11 18 7 18 Q2 18 2 14z M14 2 L11.5 14 M28 2 L30.5 14 M21 2 V14 M6 18 V38 H36 V18 M16 38 V28 Q16 24 21 24 Q26 24 26 28 V38" fill="none" stroke="#fff" stroke-width="2.2" stroke-linejoin="round"/></svg><div class="tx w">Navigate to our rewards store<br>to redeem your coins!</div><div class="nx" style="right:24px"><span>5/5</span>DONE</div></div>
 <div class="st"><div class="time">9:41</div><svg style="position:absolute;left:507px;top:28px" width="22" height="17" viewBox="0 0 22 17"><rect x="0" y="11" width="4" height="6" rx="1" fill="#fff"/><rect x="6" y="8" width="4" height="9" rx="1" fill="#fff"/><rect x="12" y="4" width="4" height="13" rx="1" fill="#fff"/><rect x="18" y="0" width="4" height="17" rx="1" fill="#fff"/></svg><svg style="position:absolute;left:548px;top:27px" width="22" height="18" viewBox="0 0 22 18"><path d="M1 6 Q11 -2 21 6 M4.5 9.5 Q11 4 17.5 9.5 M8 13 Q11 10.5 14 13" fill="none" stroke="#fff" stroke-width="2.6" stroke-linecap="round"/><circle cx="11" cy="16" r="1.8" fill="#fff"/></svg><svg style="position:absolute;left:585px;top:28px" width="38" height="17" viewBox="0 0 38 17"><rect x="0" y="1" width="34" height="15" rx="4" fill="#fff"/><rect x="35" y="6" width="2.5" height="5" rx="1" fill="#fff" opacity=".6"/></svg></div>
 <div class="notch"><div class="spk"></div><div class="cam"></div></div>
</div>
<div class="btn" style="left:-2px;top:240px;height:60px"></div><div class="btn" style="left:-2px;top:350px;height:110px"></div><div class="btn" style="right:-2px;top:380px;height:150px"></div>
</div>

</body></html>
